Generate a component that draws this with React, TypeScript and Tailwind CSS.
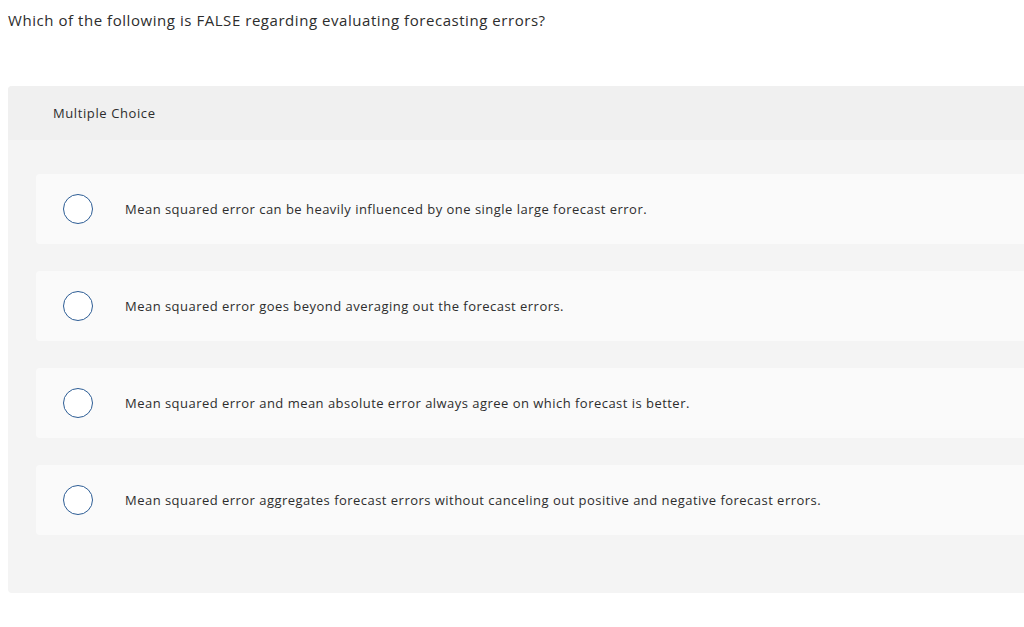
import React from "react";

const options = [
  "Mean squared error can be heavily influenced by one single large forecast error.",
  "Mean squared error goes beyond averaging out the forecast errors.",
  "Mean squared error and mean absolute error always agree on which forecast is better.",
  "Mean squared error aggregates forecast errors without canceling out positive and negative forecast errors.",
];

export default function App() {
  return (
    <div
      className="w-[1024px] h-[627px] overflow-hidden bg-white text-[#333333]"
      style={{ fontFamily: "'Open Sans', sans-serif" }}
    >
      <div className="pl-[8px] pt-[10px] text-[15px] leading-[20px] tracking-[0.55px] text-[#2d2d2d]">
        Which of the following is FALSE regarding evaluating forecasting errors?
      </div>
      <div className="ml-[8px] mt-[56px] w-[1050px] rounded-l-[4px] bg-[#f4f4f4]">
        <div className="h-[54px] flex items-center pl-[45px] pt-[1px] bg-[#f0f0f0] rounded-tl-[4px] text-[13px] tracking-[0.6px] text-[#2d2d2d]">
          Multiple Choice
        </div>
        <div className="pt-[34px] pb-[58px] pl-[28px] flex flex-col gap-[27px]">
          {options.map((o) => (
            <div
              key={o}
              className="h-[70px] bg-[#fafafa] rounded-l-[4px] flex items-center"
            >
              <div className="ml-[27px] w-[30px] h-[30px] rounded-full border-[1.5px] border-[#2d5d95] bg-white shrink-0" />
              <div className="ml-[32px] pt-[1px] text-[13px] tracking-[0.47px] text-[#2d2d2d]">{o}</div>
            </div>
          ))}
        </div>
      </div>
    </div>
  );
}
